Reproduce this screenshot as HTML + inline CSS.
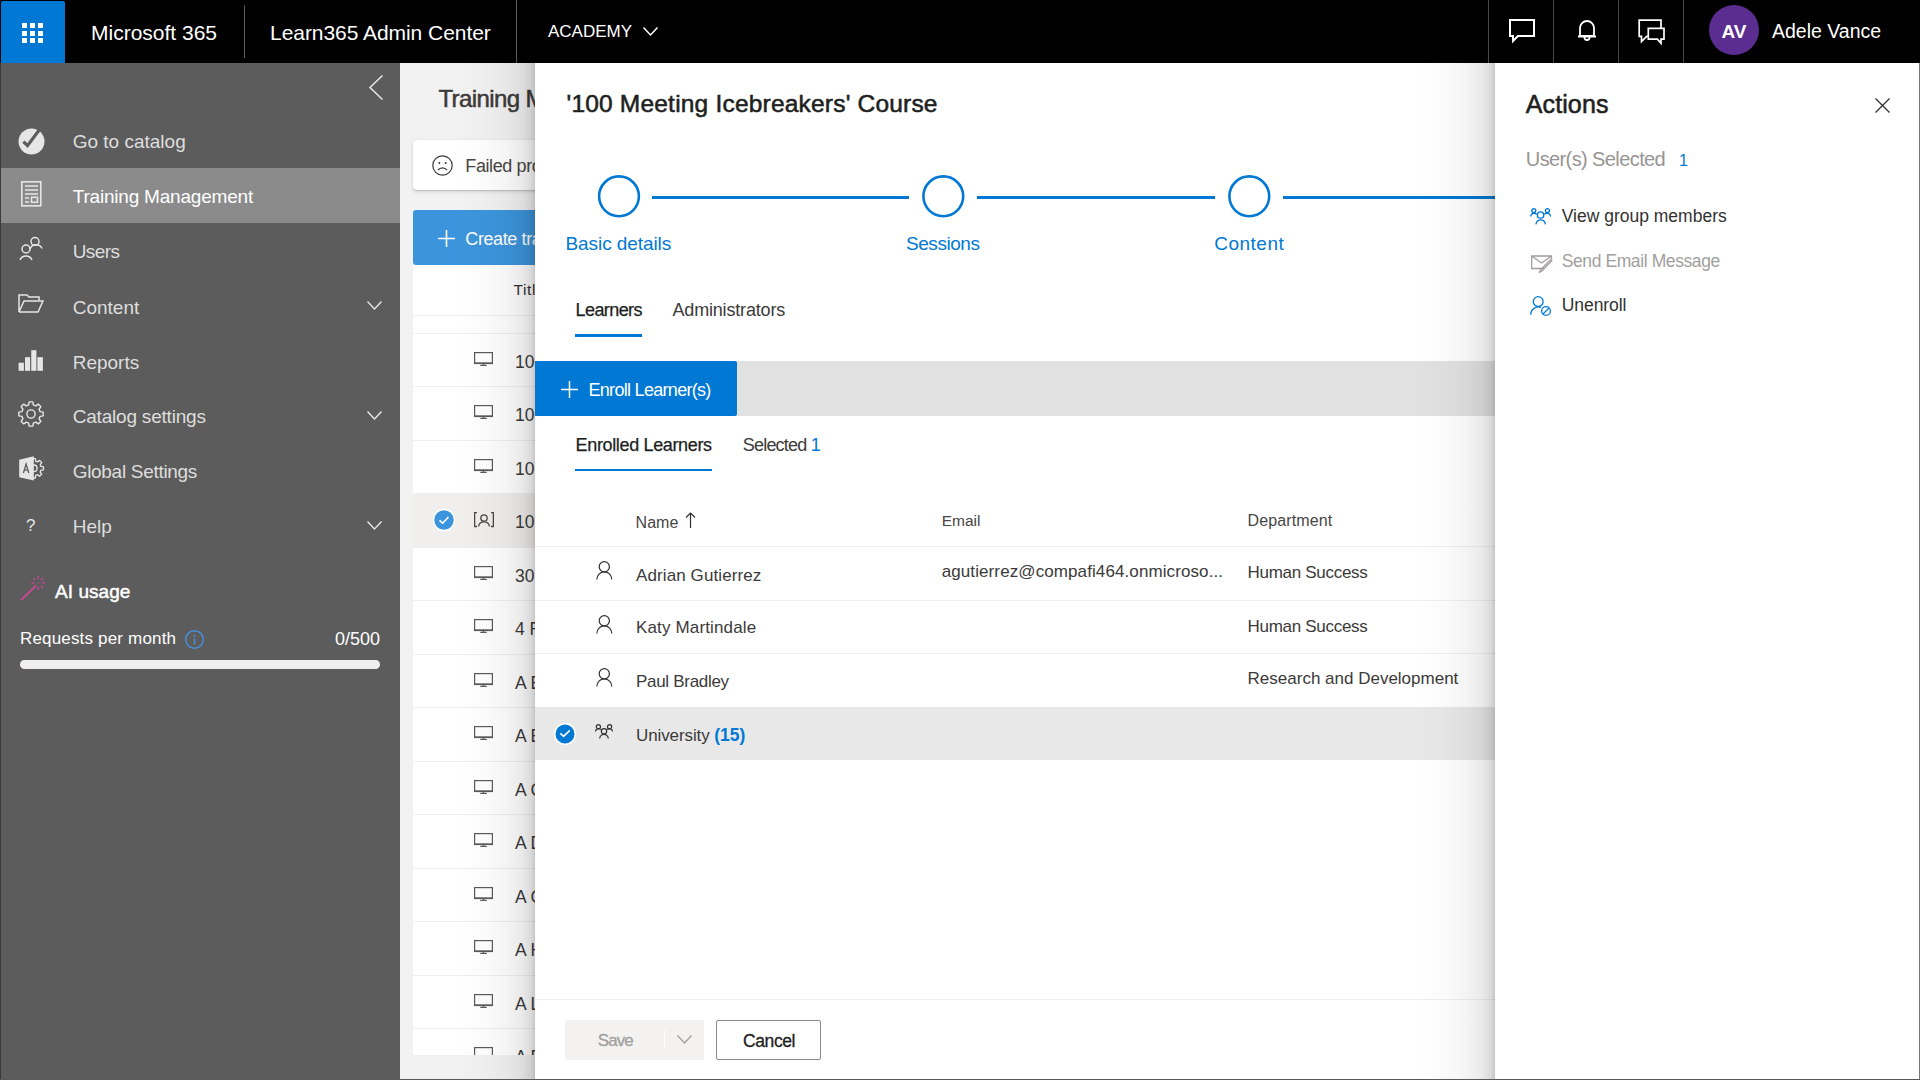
<!DOCTYPE html>
<html><head><meta charset="utf-8">
<style>
*{box-sizing:border-box;margin:0;padding:0}
html,body{width:1920px;height:1080px;overflow:hidden;background:#f2f2f2;font-family:"Liberation Sans",sans-serif}
.a{position:absolute}
.t{position:absolute;white-space:nowrap;line-height:1}
svg{position:absolute;overflow:visible}
</style></head><body>
<!-- TOP BAR -->
<div class="a" style="left:0;top:0;width:1920px;height:63px;background:#000"></div>
<div class="a" style="left:1px;top:1px;width:64px;height:62px;background:#0078d4;border-radius:2px 2px 0 0"></div>
<svg style="left:22px;top:23px" width="22" height="21" viewBox="0 0 22 21">
<g fill="#fff"><rect x="0" y="0" width="5" height="5"/><rect x="8" y="0" width="5" height="5"/><rect x="16" y="0" width="5" height="5"/>
<rect x="0" y="8" width="5" height="5"/><rect x="8" y="8" width="5" height="5"/><rect x="16" y="8" width="5" height="5"/>
<rect x="0" y="15" width="5" height="5"/><rect x="8" y="15" width="5" height="5"/><rect x="16" y="15" width="5" height="5"/></g></svg>
<div class="t" style="left:91px;top:22px;font-size:21px;color:#fff">Microsoft 365</div>
<div class="a" style="left:244px;top:5px;width:1px;height:53px;background:#5a5a5a"></div>
<div class="t" style="left:270px;top:22px;font-size:21px;color:#fff;letter-spacing:-0.05px">Learn365 Admin Center</div>
<div class="a" style="left:516px;top:0;width:1px;height:63px;background:#5a5a5a"></div>
<div class="t" style="left:548px;top:22.5px;font-size:17px;color:#fff">ACADEMY</div>
<svg style="left:643px;top:27px" width="15" height="9" viewBox="0 0 15 9"><path d="M0.5 0.5 L7.5 8 L14.5 0.5" fill="none" stroke="#fff" stroke-width="1.5"/></svg>

<div class="a" style="left:1488px;top:0;width:1px;height:63px;background:#4a4a4a"></div>
<div class="a" style="left:1553px;top:0;width:1px;height:63px;background:#4a4a4a"></div>
<div class="a" style="left:1618px;top:0;width:1px;height:63px;background:#4a4a4a"></div>
<div class="a" style="left:1683px;top:0;width:1px;height:63px;background:#4a4a4a"></div>
<svg style="left:1509px;top:19px" width="26" height="24" viewBox="0 0 26 24"><path d="M1 1 H25 V17 H9 L4 22 V17 H1 Z" fill="none" stroke="#fff" stroke-width="2" stroke-linejoin="miter"/></svg>
<svg style="left:1577px;top:19px" width="20" height="23" viewBox="0 0 20 23"><path d="M3 17 V9 A7 7 0 0 1 17 9 V17 Z M1 17.5 H19 M7.5 18.5 A2.5 2.5 0 0 0 12.5 18.5" fill="none" stroke="#fff" stroke-width="1.8"/></svg>
<svg style="left:1638px;top:18.8px" width="28" height="26" viewBox="0 0 28 26"><g fill="none" stroke="#fff" stroke-width="1.7" stroke-linejoin="miter"><path d="M23 9.3 V1.1 H1.2 V17.3 H3.5 V22.5 L8.7 17.3 H10.3"/><path d="M10.3 9.3 H26 V20.1 H23 V24.3 L19.4 20.1 H10.3 Z"/></g></svg>
<div class="a" style="left:1709px;top:5px;width:50px;height:50px;border-radius:50%;background:#5c2d91"></div>
<div class="t" style="left:1709px;top:22px;width:50px;text-align:center;font-size:19px;font-weight:700;color:#fff">AV</div>
<div class="t" style="left:1772px;top:22.3px;font-size:19.5px;color:#fff">Adele Vance</div>

<!-- SIDEBAR -->
<div class="a" style="left:0;top:63px;width:400px;height:1017px;background:#5c5c5c"></div>
<div class="a" style="left:0;top:63px;width:1px;height:1017px;background:#3a3a3a"></div>
<div class="a" style="left:1px;top:168px;width:399px;height:55px;background:#8b8b8b"></div>
<svg style="left:369px;top:75px" width="14" height="25" viewBox="0 0 14 25"><path d="M13.5 0.5 L1 12.5 L13.5 24.5" fill="none" stroke="#e8e8e8" stroke-width="1.5"/></svg>

<div id="sbtext" style="color:#dedede">
<div class="t" style="left:72.7px;top:132.3px;font-size:19px">Go to catalog</div>
<div class="t" style="left:72.7px;top:187.3px;font-size:19px;color:#fff;letter-spacing:-0.2px">Training Management</div>
<div class="t" style="left:72.7px;top:242.3px;font-size:19px;letter-spacing:-0.6px">Users</div>
<div class="t" style="left:72.7px;top:297.5px;font-size:19px">Content</div>
<div class="t" style="left:72.7px;top:352.7px;font-size:19px">Reports</div>
<div class="t" style="left:72.7px;top:407.3px;font-size:19px;letter-spacing:-0.2px">Catalog settings</div>
<div class="t" style="left:72.7px;top:462.3px;font-size:19px;letter-spacing:-0.3px">Global Settings</div>
<div class="t" style="left:72.7px;top:517.3px;font-size:19px">Help</div>
</div>
<!-- sidebar chevrons -->
<svg style="left:367px;top:301px" width="15" height="9" viewBox="0 0 15 9"><path d="M0.5 0.5 L7.5 8 L14.5 0.5" fill="none" stroke="#e6e6e6" stroke-width="1.4"/></svg>
<svg style="left:367px;top:411px" width="15" height="9" viewBox="0 0 15 9"><path d="M0.5 0.5 L7.5 8 L14.5 0.5" fill="none" stroke="#e6e6e6" stroke-width="1.4"/></svg>
<svg style="left:367px;top:521px" width="15" height="9" viewBox="0 0 15 9"><path d="M0.5 0.5 L7.5 8 L14.5 0.5" fill="none" stroke="#e6e6e6" stroke-width="1.4"/></svg>
<!-- sidebar icons -->
<svg style="left:18px;top:128px" width="27" height="27" viewBox="0 0 27 27"><circle cx="13.5" cy="13.5" r="13" fill="#e6e6e6"/><path d="M5.4 13.6 L9.5 17.6 L21 2.2" fill="none" stroke="#5c5c5c" stroke-width="3.2"/></svg>
<svg style="left:21px;top:181px" width="21" height="26" viewBox="0 0 21 26"><rect x="0.8" y="0.8" width="19" height="24" fill="none" stroke="#e6e6e6" stroke-width="1.6"/><path d="M4 5 H17 M4 9 H17 M4 13 H17 M4 17 H8 M4 21 H8" stroke="#e6e6e6" stroke-width="1.5"/><rect x="10.5" y="16.3" width="6" height="5" fill="none" stroke="#e6e6e6" stroke-width="1.5"/></svg>
<svg style="left:19px;top:236px" width="25" height="25" viewBox="0 0 25 25"><circle cx="16" cy="5.5" r="4" fill="none" stroke="#e6e6e6" stroke-width="1.5"/><path d="M11 13 A6.5 6.5 0 0 1 23 12.5" fill="none" stroke="#e6e6e6" stroke-width="1.5"/><circle cx="7" cy="13" r="4" fill="none" stroke="#e6e6e6" stroke-width="1.5"/><path d="M1 24 A6.5 6.5 0 0 1 13 24" fill="none" stroke="#e6e6e6" stroke-width="1.5"/></svg>
<svg style="left:18px;top:294px" width="26" height="19" viewBox="0 0 26 19"><path d="M1 18 V1 H9 L11 3 H21 V6 M1 18 H20 L25 7 H6 L1 18" fill="none" stroke="#e6e6e6" stroke-width="1.5" stroke-linejoin="miter"/></svg>
<svg style="left:18px;top:350px" width="26" height="21" viewBox="0 0 26 21"><g fill="#e6e6e6"><rect x="0.6" y="12.7" width="5.3" height="8.1"/><rect x="7" y="7.2" width="5.1" height="13.6"/><rect x="13.25" y="0.2" width="5.15" height="20.6"/><rect x="19.4" y="7.2" width="5.5" height="13.6"/></g></svg>
<svg style="left:18.35px;top:401.2px" width="26" height="26" viewBox="0 0 26 26"><g fill="none" stroke="#e6e6e6" stroke-width="1.4" stroke-linejoin="round"><path d="M10.65 3.90 L11.18 0.84 L14.82 0.84 L15.35 3.90 L17.77 4.90 L20.32 3.11 L22.89 5.68 L21.10 8.23 L22.10 10.65 L25.16 11.18 L25.16 14.82 L22.10 15.35 L21.10 17.77 L22.89 20.32 L20.32 22.89 L17.77 21.10 L15.35 22.10 L14.82 25.16 L11.18 25.16 L10.65 22.10 L8.23 21.10 L5.68 22.89 L3.11 20.32 L4.90 17.77 L3.90 15.35 L0.84 14.82 L0.84 11.18 L3.90 10.65 L4.90 8.23 L3.11 5.68 L5.68 3.11 L8.23 4.90 Z"/><circle cx="13" cy="13" r="4.1"/></g></svg>
<svg style="left:18px;top:455px" width="28" height="28" viewBox="0 0 28 28"><g fill="none" stroke="#e6e6e6" stroke-width="1.3" stroke-linejoin="round"><path d="M13.88 6.15 L14.27 3.62 L17.33 3.62 L17.72 6.15 L19.50 6.89 L21.56 5.37 L23.73 7.54 L22.21 9.60 L22.95 11.38 L25.48 11.77 L25.48 14.83 L22.95 15.22 L22.21 17.00 L23.73 19.06 L21.56 21.23 L19.50 19.71 L17.72 20.45 L17.33 22.98 L14.27 22.98 L13.88 20.45 L12.10 19.71 L10.04 21.23 L7.87 19.06 L9.39 17.00 L8.65 15.22 L6.12 14.83 L6.12 11.77 L8.65 11.38 L9.39 9.60 L7.87 7.54 L10.04 5.37 L12.10 6.89 Z"/><circle cx="15.8" cy="13.3" r="3.3"/></g><path d="M1.2 4.7 L15.8 1.2 V25.4 L1.2 22.3 Z" fill="#e6e6e6"/><path d="M5.4 18 L8.1 9.1 L10.8 18 M6.3 15.2 H9.9" fill="none" stroke="#5c5c5c" stroke-width="1.3"/></svg>
<div class="t" style="left:26px;top:517px;font-size:17px;color:#e6e6e6">?</div>
<!-- AI usage -->
<svg style="left:20px;top:575px" width="28" height="28" viewBox="0 0 28 28"><g stroke="#d4469c" fill="none"><path d="M0.9 25.2 L16.3 10.3" stroke-width="1.7"/><path d="M18.20 3.90 L18.20 1.10 M21.03 5.07 L23.01 3.09 M22.20 7.90 L25.00 7.90 M21.03 10.73 L23.01 12.71 M18.20 11.90 L18.20 14.70 M14.20 7.90 L11.40 7.90 M15.37 5.07 L13.39 3.09 " stroke-width="1.3"/></g><circle cx="18.2" cy="7.9" r="0.7" fill="#d4469c"/></svg>
<div class="t" style="left:55px;top:581.5px;font-size:19px;color:#fff;letter-spacing:0.05px;-webkit-text-stroke:0.45px #fff">AI usage</div>
<div class="t" style="left:20px;top:630px;font-size:17px;color:#fff;letter-spacing:0.17px">Requests per month</div>
<svg style="left:185px;top:630px" width="20" height="20" viewBox="0 0 20 20"><circle cx="9.5" cy="9.5" r="8.8" fill="none" stroke="#4a90e2" stroke-width="1.4"/><path d="M9.5 8.5 V14.5" stroke="#4a90e2" stroke-width="1.5"/><circle cx="9.5" cy="5.8" r="1" fill="#4a90e2"/></svg>
<div class="t" style="left:335px;top:630px;font-size:18px;color:#fff">0/500</div>
<div class="a" style="left:20px;top:659.5px;width:360px;height:9px;border-radius:5px;background:#f0efed"></div>

<!-- MAIN BACKGROUND AREA -->
<div class="t" style="left:438.4px;top:86.8px;font-size:24px;color:#3b3a39;letter-spacing:-0.6px;-webkit-text-stroke:0.5px #3b3a39">Training Management</div>
<div class="a" style="left:413px;top:140px;width:400px;height:50px;background:#fff;border-radius:4px;box-shadow:0 1.6px 3.6px rgba(0,0,0,.13),0 .3px .9px rgba(0,0,0,.11)"></div>
<svg style="left:432px;top:155px" width="21" height="21" viewBox="0 0 21 21"><g fill="none" stroke="#3b3a39" stroke-width="1.2"><circle cx="10.5" cy="10.5" r="9.7"/><path d="M6 15.2 A5.5 5.5 0 0 1 15 15.2"/></g><circle cx="7.3" cy="8" r="1" fill="#3b3a39"/><circle cx="13.7" cy="8" r="1" fill="#3b3a39"/></svg>
<div class="t" style="left:465.3px;top:156.8px;font-size:18px;color:#484644;letter-spacing:-0.4px">Failed processing</div>
<div class="a" style="left:413px;top:210px;width:400px;height:55px;background:#3c95dc;border-radius:3px"></div>
<svg style="left:438px;top:230px" width="17" height="17" viewBox="0 0 17 17"><path d="M8.5 0 V17 M0 8.5 H17" stroke="#fff" stroke-width="1.6"/></svg>
<div class="t" style="left:465.3px;top:229.6px;font-size:18px;color:#fff;letter-spacing:-0.4px">Create training</div>
<div class="a" style="left:0;top:0;width:1920px;height:1055px;overflow:hidden">
<div class="a" style="left:413px;top:265px;width:400px;height:790px;background:#fff"></div>
<div class="t" style="left:513.5px;top:281.8px;font-size:15.5px;color:#323130;letter-spacing:0.6px">Title</div>
<div class="a" style="left:413px;top:315px;width:400px;height:1px;background:#f0efee"></div>
<div class="a" style="left:413px;top:333px;width:400px;height:1px;background:#f0efee"></div>
<div class="a" style="left:413px;top:386px;width:400px;height:1px;background:#f0efee"></div>
<div class="a" style="left:413px;top:440px;width:400px;height:1px;background:#f0efee"></div>
<div class="a" style="left:413px;top:493px;width:400px;height:1px;background:#f0efee"></div>
<div class="a" style="left:413px;top:547px;width:400px;height:1px;background:#f0efee"></div>
<div class="a" style="left:413px;top:600px;width:400px;height:1px;background:#f0efee"></div>
<div class="a" style="left:413px;top:654px;width:400px;height:1px;background:#f0efee"></div>
<div class="a" style="left:413px;top:707px;width:400px;height:1px;background:#f0efee"></div>
<div class="a" style="left:413px;top:761px;width:400px;height:1px;background:#f0efee"></div>
<div class="a" style="left:413px;top:814px;width:400px;height:1px;background:#f0efee"></div>
<div class="a" style="left:413px;top:868px;width:400px;height:1px;background:#f0efee"></div>
<div class="a" style="left:413px;top:921px;width:400px;height:1px;background:#f0efee"></div>
<div class="a" style="left:413px;top:975px;width:400px;height:1px;background:#f0efee"></div>
<div class="a" style="left:413px;top:1028px;width:400px;height:1px;background:#f0efee"></div>
<div class="a" style="left:413px;top:494px;width:400px;height:53px;background:#f0efee"></div>
<svg style="left:474px;top:352px" width="20" height="15" viewBox="0 0 20 15"><g fill="none" stroke="#5a5a5a"><rect x="0.6" y="0.6" width="17.8" height="10.6" stroke-width="1.2"/><path d="M0 11.3 H19" stroke-width="1.6"/><path d="M9.5 11.5 V13.3 M6.3 13.4 H12.7" stroke-width="1.2"/></g></svg>
<div class="t" style="left:515px;top:354.0px;font-size:17.5px;color:#3b3a39">100 Meeting</div>
<svg style="left:474px;top:405px" width="20" height="15" viewBox="0 0 20 15"><g fill="none" stroke="#5a5a5a"><rect x="0.6" y="0.6" width="17.8" height="10.6" stroke-width="1.2"/><path d="M0 11.3 H19" stroke-width="1.6"/><path d="M9.5 11.5 V13.3 M6.3 13.4 H12.7" stroke-width="1.2"/></g></svg>
<div class="t" style="left:515px;top:407.0px;font-size:17.5px;color:#3b3a39">100 Ways</div>
<svg style="left:474px;top:459px" width="20" height="15" viewBox="0 0 20 15"><g fill="none" stroke="#5a5a5a"><rect x="0.6" y="0.6" width="17.8" height="10.6" stroke-width="1.2"/><path d="M0 11.3 H19" stroke-width="1.6"/><path d="M9.5 11.5 V13.3 M6.3 13.4 H12.7" stroke-width="1.2"/></g></svg>
<div class="t" style="left:515px;top:461.0px;font-size:17.5px;color:#3b3a39">10 Steps</div>
<svg style="left:433px;top:509px" width="22" height="22" viewBox="0 0 22 22"><circle cx="11" cy="11" r="10.5" fill="#3c95dc" stroke="#fff" stroke-width="1.5"/><path d="M6.5 11.3 L9.6 14.2 L15.5 8" fill="none" stroke="#fff" stroke-width="1.6"/></svg>
<svg style="left:474px;top:512px" width="20" height="16" viewBox="0 0 20 16"><g fill="none" stroke="#4a4a4a" stroke-width="1.3"><path d="M3 0.65 H0.65 V14.5 H3 M17 0.65 H19.35 V14.5 H17"/><circle cx="10" cy="6" r="3.2"/><path d="M4.5 14.5 A5.6 5.6 0 0 1 15.5 14.5"/></g></svg>
<div class="t" style="left:515px;top:514.0px;font-size:17.5px;color:#3b3a39">100 Meeting Icebreakers</div>
<svg style="left:474px;top:566px" width="20" height="15" viewBox="0 0 20 15"><g fill="none" stroke="#5a5a5a"><rect x="0.6" y="0.6" width="17.8" height="10.6" stroke-width="1.2"/><path d="M0 11.3 H19" stroke-width="1.6"/><path d="M9.5 11.5 V13.3 M6.3 13.4 H12.7" stroke-width="1.2"/></g></svg>
<div class="t" style="left:515px;top:568.0px;font-size:17.5px;color:#3b3a39">30-60-90</div>
<svg style="left:474px;top:619px" width="20" height="15" viewBox="0 0 20 15"><g fill="none" stroke="#5a5a5a"><rect x="0.6" y="0.6" width="17.8" height="10.6" stroke-width="1.2"/><path d="M0 11.3 H19" stroke-width="1.6"/><path d="M9.5 11.5 V13.3 M6.3 13.4 H12.7" stroke-width="1.2"/></g></svg>
<div class="t" style="left:515px;top:621.0px;font-size:17.5px;color:#3b3a39">4 Rules</div>
<svg style="left:474px;top:673px" width="20" height="15" viewBox="0 0 20 15"><g fill="none" stroke="#5a5a5a"><rect x="0.6" y="0.6" width="17.8" height="10.6" stroke-width="1.2"/><path d="M0 11.3 H19" stroke-width="1.6"/><path d="M9.5 11.5 V13.3 M6.3 13.4 H12.7" stroke-width="1.2"/></g></svg>
<div class="t" style="left:515px;top:675.0px;font-size:17.5px;color:#3b3a39">A Best</div>
<svg style="left:474px;top:726px" width="20" height="15" viewBox="0 0 20 15"><g fill="none" stroke="#5a5a5a"><rect x="0.6" y="0.6" width="17.8" height="10.6" stroke-width="1.2"/><path d="M0 11.3 H19" stroke-width="1.6"/><path d="M9.5 11.5 V13.3 M6.3 13.4 H12.7" stroke-width="1.2"/></g></svg>
<div class="t" style="left:515px;top:728.0px;font-size:17.5px;color:#3b3a39">A Better</div>
<svg style="left:474px;top:780px" width="20" height="15" viewBox="0 0 20 15"><g fill="none" stroke="#5a5a5a"><rect x="0.6" y="0.6" width="17.8" height="10.6" stroke-width="1.2"/><path d="M0 11.3 H19" stroke-width="1.6"/><path d="M9.5 11.5 V13.3 M6.3 13.4 H12.7" stroke-width="1.2"/></g></svg>
<div class="t" style="left:515px;top:782.0px;font-size:17.5px;color:#3b3a39">A Complete</div>
<svg style="left:474px;top:833px" width="20" height="15" viewBox="0 0 20 15"><g fill="none" stroke="#5a5a5a"><rect x="0.6" y="0.6" width="17.8" height="10.6" stroke-width="1.2"/><path d="M0 11.3 H19" stroke-width="1.6"/><path d="M9.5 11.5 V13.3 M6.3 13.4 H12.7" stroke-width="1.2"/></g></svg>
<div class="t" style="left:515px;top:835.0px;font-size:17.5px;color:#3b3a39">A Day</div>
<svg style="left:474px;top:887px" width="20" height="15" viewBox="0 0 20 15"><g fill="none" stroke="#5a5a5a"><rect x="0.6" y="0.6" width="17.8" height="10.6" stroke-width="1.2"/><path d="M0 11.3 H19" stroke-width="1.6"/><path d="M9.5 11.5 V13.3 M6.3 13.4 H12.7" stroke-width="1.2"/></g></svg>
<div class="t" style="left:515px;top:889.0px;font-size:17.5px;color:#3b3a39">A Guide</div>
<svg style="left:474px;top:940px" width="20" height="15" viewBox="0 0 20 15"><g fill="none" stroke="#5a5a5a"><rect x="0.6" y="0.6" width="17.8" height="10.6" stroke-width="1.2"/><path d="M0 11.3 H19" stroke-width="1.6"/><path d="M9.5 11.5 V13.3 M6.3 13.4 H12.7" stroke-width="1.2"/></g></svg>
<div class="t" style="left:515px;top:942.0px;font-size:17.5px;color:#3b3a39">A How</div>
<svg style="left:474px;top:994px" width="20" height="15" viewBox="0 0 20 15"><g fill="none" stroke="#5a5a5a"><rect x="0.6" y="0.6" width="17.8" height="10.6" stroke-width="1.2"/><path d="M0 11.3 H19" stroke-width="1.6"/><path d="M9.5 11.5 V13.3 M6.3 13.4 H12.7" stroke-width="1.2"/></g></svg>
<div class="t" style="left:515px;top:996.0px;font-size:17.5px;color:#3b3a39">A Look</div>
<svg style="left:474px;top:1047px" width="20" height="15" viewBox="0 0 20 15"><g fill="none" stroke="#5a5a5a"><rect x="0.6" y="0.6" width="17.8" height="10.6" stroke-width="1.2"/><path d="M0 11.3 H19" stroke-width="1.6"/><path d="M9.5 11.5 V13.3 M6.3 13.4 H12.7" stroke-width="1.2"/></g></svg>
<div class="t" style="left:515px;top:1049.0px;font-size:17.5px;color:#3b3a39">A Perfect</div>

</div>
<!-- PANEL SHADOW over background -->
<div class="a" style="left:455px;top:63px;width:80px;height:1017px;background:linear-gradient(to right,rgba(0,0,0,0) 0%,rgba(0,0,0,.015) 35%,rgba(0,0,0,.045) 65%,rgba(0,0,0,.09) 85%,rgba(0,0,0,.15) 95%,rgba(0,0,0,.22) 100%)"></div>
<!-- MAIN PANEL -->
<div class="a" style="left:535px;top:63px;width:960px;height:1017px;background:#fff"></div>
<div class="t" style="left:566.5px;top:92.3px;font-size:24.5px;color:#201f1e;letter-spacing:0.2px;-webkit-text-stroke:0.55px #201f1e">'100 Meeting Icebreakers' Course</div>
<svg style="left:535px;top:150px" width="960" height="100" viewBox="0 0 960 100">
<g fill="none" stroke="#0078d4" stroke-width="2.6"><circle cx="84" cy="46.3" r="19.9"/><circle cx="408.3" cy="46.3" r="19.9"/><circle cx="714.3" cy="46.3" r="19.9"/></g>
<g fill="#0078d4"><rect x="117" y="46" width="257" height="3"/><rect x="442" y="46" width="238" height="3"/><rect x="748" y="46" width="212" height="3"/></g>
</svg>
<div class="t" style="left:565.5px;top:234.4px;font-size:19px;color:#0078d4;letter-spacing:-0.08px">Basic details</div>
<div class="t" style="left:906px;top:234.4px;font-size:19px;color:#0078d4;letter-spacing:-0.45px">Sessions</div>
<div class="t" style="left:1214.2px;top:234.4px;font-size:19px;color:#0078d4;letter-spacing:0.5px">Content</div>
<div class="t" style="left:575.6px;top:301.2px;font-size:18px;color:#201f1e;letter-spacing:-0.6px;-webkit-text-stroke:0.25px #201f1e">Learners</div>
<div class="a" style="left:575px;top:334px;width:67px;height:3px;background:#0078d4"></div>
<div class="t" style="left:672.5px;top:301.2px;font-size:18px;color:#3b3a39;letter-spacing:-0.18px">Administrators</div>
<div class="a" style="left:535px;top:361px;width:960px;height:55px;background:#e1e1e1"></div>
<div class="a" style="left:535px;top:361px;width:202px;height:55px;background:#0078d4;border-radius:0 2px 2px 0"></div>
<svg style="left:561px;top:381px" width="17" height="17" viewBox="0 0 17 17"><path d="M8.5 0 V17 M0 8.5 H17" stroke="#fff" stroke-width="1.5"/></svg>
<div class="t" style="left:588.5px;top:381.2px;font-size:18px;color:#fff;letter-spacing:-0.7px">Enroll Learner(s)</div>
<div class="t" style="left:575.6px;top:435.6px;font-size:18px;color:#201f1e;letter-spacing:-0.35px;-webkit-text-stroke:0.25px #201f1e">Enrolled Learners</div>
<div class="a" style="left:575px;top:469px;width:137px;height:2px;background:#0078d4"></div>
<div class="t" style="left:742.8px;top:435.6px;font-size:18px;color:#3b3a39;letter-spacing:-0.8px">Selected <span style="color:#0078d4;letter-spacing:0">1</span></div>

<div class="t" style="left:635.6px;top:515.2px;font-size:16px;color:#484644">Name</div>
<svg style="left:685px;top:512px" width="11" height="16" viewBox="0 0 11 16"><path d="M5.5 1 V16 M1 5.5 L5.5 1 L10 5.5" fill="none" stroke="#323130" stroke-width="1.2"/></svg>
<div class="t" style="left:941.7px;top:513px;font-size:15.5px;color:#484644">Email</div>
<div class="t" style="left:1247.6px;top:512.7px;font-size:16px;color:#484644;letter-spacing:0.1px">Department</div>
<div class="a" style="left:535px;top:546px;width:960px;height:1px;background:#f0efee"></div>
<div class="a" style="left:535px;top:600px;width:960px;height:1px;background:#f0efee"></div>
<div class="a" style="left:535px;top:653px;width:960px;height:1px;background:#f0efee"></div>
<div class="a" style="left:535px;top:707px;width:960px;height:53px;background:#e8e8e8"></div>
<svg style="left:596px;top:561px" width="17" height="19" viewBox="0 0 17 19"><g fill="none" stroke="#323130" stroke-width="1.2"><circle cx="8.3" cy="5.8" r="5.1"/><path d="M0.8 18.6 A7.5 7.8 0 0 1 15.8 18.6"/></g></svg>
<svg style="left:596px;top:614.5px" width="17" height="19" viewBox="0 0 17 19"><g fill="none" stroke="#323130" stroke-width="1.2"><circle cx="8.3" cy="5.8" r="5.1"/><path d="M0.8 18.6 A7.5 7.8 0 0 1 15.8 18.6"/></g></svg>
<svg style="left:596px;top:668px" width="17" height="19" viewBox="0 0 17 19"><g fill="none" stroke="#323130" stroke-width="1.2"><circle cx="8.3" cy="5.8" r="5.1"/><path d="M0.8 18.6 A7.5 7.8 0 0 1 15.8 18.6"/></g></svg>
<div class="t" style="left:636px;top:566.6px;font-size:17px;color:#3b3a39;letter-spacing:0.1px">Adrian Gutierrez</div>
<div class="t" style="left:636px;top:619.4px;font-size:17px;color:#3b3a39;letter-spacing:0.15px">Katy Martindale</div>
<div class="t" style="left:636px;top:673.4px;font-size:17px;color:#3b3a39;letter-spacing:-0.3px">Paul Bradley</div>
<div class="t" style="left:941.7px;top:563.1px;font-size:17px;color:#3b3a39;letter-spacing:0.1px">agutierrez@compafi464.onmicroso...</div>
<div class="t" style="left:1247.6px;top:563.6px;font-size:17px;color:#3b3a39;letter-spacing:-0.3px">Human Success</div>
<div class="t" style="left:1247.6px;top:617.5px;font-size:17px;color:#3b3a39;letter-spacing:-0.3px">Human Success</div>
<div class="t" style="left:1247.6px;top:670.4px;font-size:17px;color:#3b3a39">Research and Development</div>
<svg style="left:554px;top:722.5px" width="22" height="22" viewBox="0 0 22 22"><circle cx="11" cy="11" r="10.3" fill="#0078d4" stroke="#fff" stroke-width="1.6"/><path d="M6.3 10.4 L9.6 13.3 L15.8 7.3" fill="none" stroke="#fff" stroke-width="1.7"/></svg>
<svg style="left:595px;top:723.5px" width="19" height="15" viewBox="0 0 19 15"><g fill="none" stroke="#323130" stroke-width="1.2"><circle cx="3.4" cy="2.7" r="2.1"/><circle cx="14.6" cy="2.7" r="2.1"/><circle cx="9" cy="7.3" r="2.7"/><path d="M0.4 7.4 A3.4 3.4 0 0 1 5.8 5.4 M17.6 7.4 A3.4 3.4 0 0 0 12.2 5.4 M4.7 14.6 A4.3 4.3 0 0 1 13.3 14.6"/></g></svg>
<div class="t" style="left:636px;top:727.1px;font-size:17px;color:#3b3a39;letter-spacing:-0.1px">University <b style="color:#0078d4;letter-spacing:0;font-size:17.5px">(15)</b></div>

<div class="a" style="left:535px;top:999px;width:960px;height:1px;background:#f0efee"></div>
<div class="a" style="left:565px;top:1020px;width:139px;height:40px;background:#f3f2f1;border-radius:2px"></div>
<div class="a" style="left:664px;top:1030px;width:1px;height:19px;background:#fff"></div>
<div class="t" style="left:597.7px;top:1032.3px;font-size:17px;color:#a19f9d;letter-spacing:-0.9px;-webkit-text-stroke:0.3px #a19f9d">Save</div>
<svg style="left:677px;top:1035px" width="15" height="9" viewBox="0 0 15 9"><path d="M0.5 0.5 L7.5 8 L14.5 0.5" fill="none" stroke="#a19f9d" stroke-width="1.2"/></svg>
<div class="a" style="left:716px;top:1020px;width:105px;height:40px;border:1px solid #8a8886;border-radius:2px;background:#fff"></div>
<div class="t" style="left:743px;top:1032.7px;font-size:17.5px;color:#201f1e;letter-spacing:-0.4px;-webkit-text-stroke:0.3px #201f1e">Cancel</div>

<!-- ACTIONS PANEL SHADOW -->
<div class="a" style="left:1415px;top:63px;width:80px;height:1017px;background:linear-gradient(to right,rgba(0,0,0,0) 0%,rgba(0,0,0,.015) 35%,rgba(0,0,0,.045) 65%,rgba(0,0,0,.09) 85%,rgba(0,0,0,.15) 95%,rgba(0,0,0,.22) 100%)"></div>
<div class="a" style="left:1495px;top:63px;width:425px;height:1017px;background:#fff"></div>
<div class="a" style="left:1919px;top:63px;width:1px;height:1017px;background:#777"></div>
<div class="t" style="left:1525.8px;top:91.8px;font-size:25px;color:#201f1e;letter-spacing:0.1px;-webkit-text-stroke:0.55px #201f1e">Actions</div>
<svg style="left:1875px;top:98px" width="15" height="15" viewBox="0 0 15 15"><path d="M0.5 0.5 L14.5 14.5 M14.5 0.5 L0.5 14.5" stroke="#323130" stroke-width="1.3"/></svg>
<div class="t" style="left:1525.8px;top:149px;font-size:20px;color:#979593;letter-spacing:-0.6px">User(s) Selected</div>
<div class="t" style="left:1679px;top:152.5px;font-size:16px;color:#0078d4">1</div>
<svg style="left:1530px;top:208px" width="22" height="17" viewBox="0 0 22 17"><g fill="none" stroke="#0078d4" stroke-width="1.3"><circle cx="3.8" cy="2.6" r="2"/><circle cx="17.4" cy="2.6" r="2"/><circle cx="10.6" cy="7" r="3.2"/><path d="M0.6 8.5 A3.6 3.6 0 0 1 6.8 6.4 M20.6 8.5 A3.6 3.6 0 0 0 14.4 6.4 M5.9 16.4 A4.9 5.6 0 0 1 15.5 16.4"/></g></svg>
<div class="t" style="left:1561.7px;top:207.8px;font-size:17.5px;color:#323130;letter-spacing:0px">View group members</div>
<svg style="left:1530.8px;top:254.5px" width="22" height="18" viewBox="0 0 22 18"><g fill="none" stroke="#a19f9d" stroke-width="1.3"><path d="M13 13.5 H0.7 V1 H20.5 V4.5 M0.7 1 L10.5 8 L20.5 1"/><path d="M20.8 5.8 L10.5 16.5 L8.5 17.2 L9.3 15.2 L19.5 4.6 Z"/></g></svg>
<div class="t" style="left:1561.7px;top:252.8px;font-size:17.5px;color:#a19f9d;letter-spacing:-0.4px">Send Email Message</div>
<svg style="left:1530px;top:296px" width="22" height="21" viewBox="0 0 22 21"><g fill="none" stroke="#0078d4" stroke-width="1.3"><circle cx="8.2" cy="5.6" r="4.9"/><path d="M0.8 18.8 A7.5 7.5 0 0 1 11 11.5"/><circle cx="16" cy="15" r="4.4"/><path d="M13 18 L19 12"/></g></svg>
<div class="t" style="left:1561.7px;top:297.2px;font-size:17.5px;color:#323130;letter-spacing:-0.05px">Unenroll</div>

<!-- FRAME LINES -->
<div class="a" style="left:0;top:1079px;width:1920px;height:1px;background:#595959"></div>
</body></html>
